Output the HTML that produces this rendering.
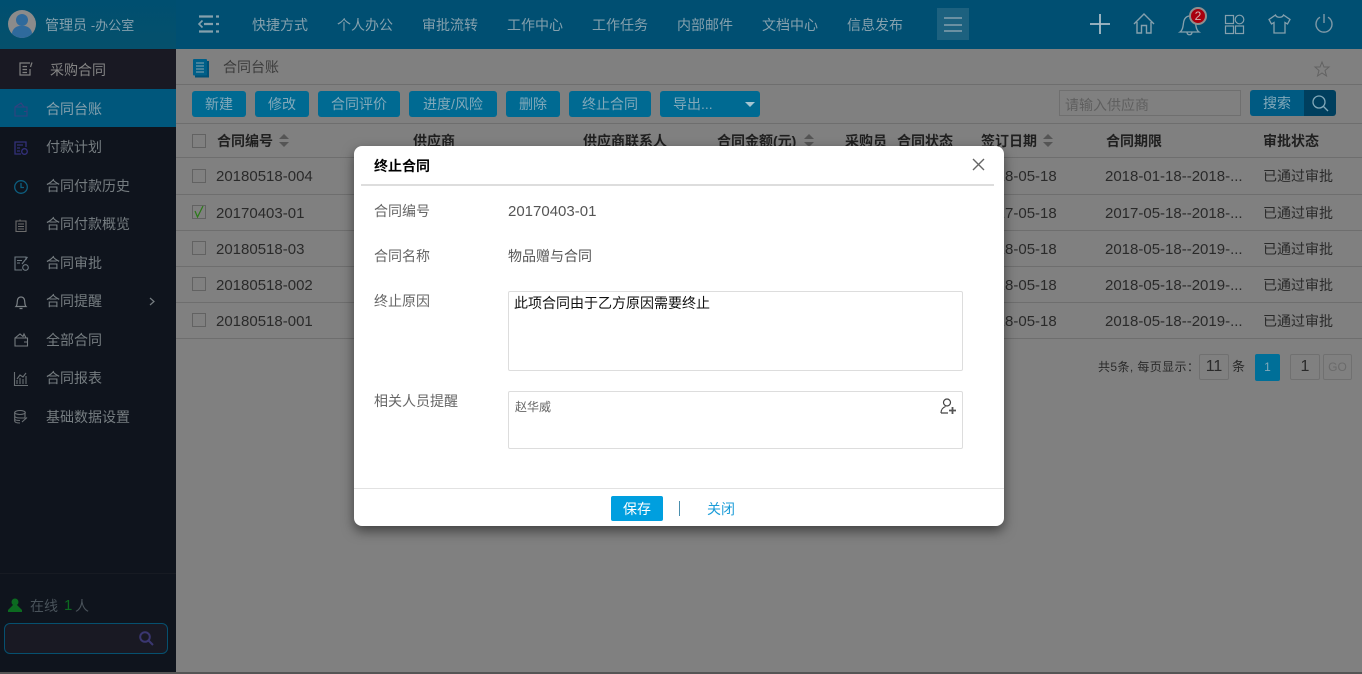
<!DOCTYPE html>
<html lang="zh"><head><meta charset="utf-8"><title>合同台账</title>
<style>
html,body{margin:0;padding:0;width:1362px;height:674px;overflow:hidden;background:#808080}
body{position:relative;font-family:"Liberation Sans","Noto Sans CJK SC",sans-serif;font-size:14px;color:#222}
.a{position:absolute}
.t{position:absolute;line-height:20px;height:20px;white-space:nowrap}
.n{color:#85a0ad}
.s{color:#767d81}
.h{color:#1f1f1f;font-weight:bold}
.c{color:#2a2a2a}
.num{font-size:15px}
.line{position:absolute;height:1px;left:176px;width:1186px;background:#6e6e6e}
.btn{position:absolute;top:91px;height:26px;line-height:26px;background:#006a92;color:#82a9ba;border-radius:3px;text-align:center}
.cb{position:absolute;left:192px;width:12px;height:12px;border:1px solid #626262}
.box{position:absolute;border:1px solid #707070;border-radius:2px;text-align:center;box-sizing:border-box}
svg{position:absolute;overflow:visible}
#modal{position:absolute;left:354px;top:146px;width:650px;height:380px;background:#fff;border-radius:8px;box-shadow:0 5px 12px rgba(0,0,0,.5)}
#modal .t{color:#666}
.fld{position:absolute;left:154px;width:455px;box-sizing:border-box;border:1px solid #ddd;border-radius:2px}
</style></head><body>

<!-- header -->
<div class="a" style="left:0;top:0;width:1362px;height:49px;background:#004f72"></div>
<div class="a" style="left:0;top:0;width:176px;height:49px;background:linear-gradient(#004f70,#05506c)"></div>
<div class="a" style="left:8px;top:10px;width:28px;height:28px;border-radius:50%;background:#8b8b8b;overflow:hidden">
  <div class="a" style="left:8px;top:4px;width:12px;height:12px;border-radius:50%;background:#2f6a9c"></div>
  <div class="a" style="left:4px;top:16px;width:20px;height:14px;border-radius:8px 8px 0 0;background:#2f6a9c"></div>
</div>
<div class="t n" style="left:45px;top:15px">管理员 <span style="font-size:13px">-办公室</span></div>
<svg style="left:198px;top:15px" width="22" height="20" fill="none" stroke="#85a0ad" stroke-width="2.200"><path d="M1 1.500H15M18 1.500H21M6 9H15M18 9H21M1 16.500H15M18 16.500H21"/><path d="M4.500 5.500L1 9L4.500 12.500" stroke-width="1.600"/></svg>
<div class="t n" style="left:252px;top:15px">快捷方式</div>
<div class="t n" style="left:337px;top:15px">个人办公</div>
<div class="t n" style="left:422px;top:15px">审批流转</div>
<div class="t n" style="left:507px;top:15px">工作中心</div>
<div class="t n" style="left:592px;top:15px">工作任务</div>
<div class="t n" style="left:677px;top:15px">内部邮件</div>
<div class="t n" style="left:762px;top:15px">文档中心</div>
<div class="t n" style="left:847px;top:15px">信息发布</div>
<div class="a" style="left:937px;top:8px;width:32px;height:32px;background:#1d617f"></div>
<svg style="left:944px;top:17px" width="18" height="15" stroke="#85a0ad" stroke-width="1.500"><path d="M0 1H18M0 8H18M0 14H18"/></svg>

<svg style="left:1090px;top:14px" width="20" height="20" stroke="#a9bcc6" stroke-width="1.800"><path d="M0 10H20M10 0V20"/></svg>
<svg style="left:1133px;top:13px" width="22" height="21" fill="none" stroke="#85a0ad" stroke-width="1.400"><path d="M1 11L11 1L21 11M4 9V20H8.500V12.500H13.500V20H18V9"/></svg>
<svg style="left:1179px;top:13px" width="21" height="23" fill="none" stroke="#85a0ad" stroke-width="1.300"><path d="M1 19C4 17 4 13 4.500 10C5 5 8 3 10.500 3C13 3 16 5 16.500 10C17 13 17 17 20 19ZM8 19.500C8.500 22.500 12.500 22.500 13 19.500"/></svg>
<div class="a" style="left:1189px;top:7px;width:14px;height:14px;border:2px solid #8f8f8f;border-radius:50%;background:#a8000e;color:#d7b3b3;font-size:12px;line-height:14px;text-align:center">2</div>
<svg style="left:1225px;top:15px" width="19" height="19" fill="none" stroke="#85a0ad" stroke-width="1.200"><rect x=".5" y=".5" width="8" height="8"/><circle cx="14.500" cy="4.500" r="4.300"/><rect x=".5" y="11" width="8" height="7.500"/><rect x="10.500" y="11" width="8" height="7.500"/></svg>
<svg style="left:1268px;top:14px" width="23" height="20" fill="none" stroke="#85a0ad" stroke-width="1.300"><path d="M7.500 1L1 5.500L3.500 10L6 8.500V19H17V8.500L19.500 10L22 5.500L15.500 1C14.500 4 8.500 4 7.500 1Z"/></svg>
<svg style="left:1315px;top:14px" width="18" height="19" fill="none" stroke="#7f99a7" stroke-width="1.400"><path d="M9 0V9M5 3.200A8 8 0 1 0 13 3.200"/></svg>

<!-- sidebar -->
<div class="a" style="left:0;top:49px;width:176px;height:625px;background:#0f141d"></div>
<div class="a" style="left:0;top:49px;width:176px;height:40px;background:#191923"></div>
<div class="a" style="left:0;top:89px;width:176px;height:38px;background:#00577c"></div>
<svg style="left:19px;top:62px" width="14" height="14" fill="none" stroke="#808080" stroke-width="1.200"><path d="M11 1H1V13H11V7M3.500 4.500H8M3.500 7.500H8M3.500 10.500H8M13 0.500L11.500 5"/></svg>
<div class="t" style="left:50px;top:60px;color:#858585">采购合同</div>
<svg style="left:14px;top:102px" width="14" height="15" fill="none" stroke="#33427f" stroke-width="1.100"><path d="M1 5L7 1L10 5M1 5H13V14H1ZM10 9.500H13"/></svg>
<div class="t s" style="left:46px;top:99px;color:#85a0ad">合同台账</div>
<svg style="left:14px;top:141px" width="14" height="14" fill="none" stroke="#33307a" stroke-width="1.300"><path d="M12 6V1H1V13H7M3 4H9M3 7H6M3 10H6"/><circle cx="10.500" cy="10.500" r="2.800"/></svg>
<div class="t s" style="left:46px;top:137px">付款计划</div>
<svg style="left:14px;top:180px" width="14" height="14" fill="none" stroke="#0d5e7f" stroke-width="1.300"><circle cx="7" cy="7" r="6.300"/><path d="M7 3V7.500H10"/></svg>
<div class="t s" style="left:46px;top:176px">合同付款历史</div>
<svg style="left:15px;top:219px" width="12" height="13" fill="none" stroke="#6c6c6c" stroke-width="1.100"><path d="M1 2H11V12.500H1ZM5 2V.5M3 5H9M3 7.500H9M3 10H9"/></svg>
<div class="t s" style="left:46px;top:214px">合同付款概览</div>
<svg style="left:14px;top:256px" width="15" height="15" fill="none" stroke="#6d7880" stroke-width="1.100"><path d="M12 4V1H1V14H8M3 4.500H8M3 7H6"/><path d="M13.500 1L8 8"/><circle cx="11.500" cy="11.500" r="2.800"/></svg>
<div class="t s" style="left:46px;top:253px">合同审批</div>
<svg style="left:15px;top:296px" width="12" height="13" fill="none" stroke="#7c8286" stroke-width="1.200"><path d="M1 10.500C2.500 9 2 6 2.500 4C3 2 4.500 1 6 1C7.500 1 9 2 9.500 4C10 6 9.500 9 11 10.500ZM4.500 12.500H7.500"/></svg>
<div class="t s" style="left:46px;top:291px">合同提醒</div>
<svg style="left:149px;top:297px" width="6" height="9" fill="none" stroke="#767d81" stroke-width="1.200"><path d="M1 1L5 4.500L1 8"/></svg>
<svg style="left:14px;top:333px" width="14" height="14" fill="none" stroke="#747a7e" stroke-width="1.100"><path d="M1 5L6 1L9 3.500L10 1L12 5M1 5H13.500V13H1ZM10 9H13.500"/></svg>
<div class="t s" style="left:46px;top:330px">全部合同</div>
<svg style="left:14px;top:372px" width="14" height="14" fill="none" stroke="#696f73" stroke-width="1.100"><path d="M.5 0V13.500H14M3 12V8M6 12V6M9 12V7M12 12V4M3 7L6 3L9 5L12 1"/></svg>
<div class="t s" style="left:46px;top:368px">合同报表</div>
<svg style="left:14px;top:410px" width="14" height="14" fill="none" stroke="#6b7074" stroke-width="1.100"><ellipse cx="6" cy="2.500" rx="5.300" ry="2"/><path d="M.7 2.500V11C.7 12.500 3 13 6 13M.7 6C.7 7.500 3 8 6 8H11V2.500M.7 9C.7 10 3 10.500 6 10.500"/><path d="M8 12L13 7.500"/></svg>
<div class="t s" style="left:46px;top:407px">基础数据设置</div>

<div class="a" style="left:0;top:573px;width:176px;height:1px;background:#171b23"></div>
<svg style="left:8px;top:598px" width="14" height="14" fill="#0c6a20"><circle cx="7" cy="4" r="3.500"/><path d="M5 7H9L14 12V14H0V12Z"/></svg>
<div class="t" style="left:30px;top:596px;color:#49525a">在线</div>
<div class="t" style="left:64px;top:596px;color:#0c6a20;font-size:15px">1</div>
<div class="t" style="left:75px;top:596px;color:#49525a">人</div>
<div class="a" style="left:4px;top:623px;width:162px;height:29px;border:1px solid #06506f;border-radius:6px;background:#191923"></div>
<svg style="left:139px;top:631px" width="15" height="15" fill="none" stroke="#3a3670" stroke-width="2"><circle cx="6" cy="6" r="4.800"/><path d="M9.500 9.500L14 14"/></svg>

<div class="a" style="left:0;top:672px;width:1362px;height:2px;background:#555"></div>

<!-- breadcrumb -->
<svg style="left:193px;top:59px" width="17" height="19" fill="#005f88"><rect x="2" y="2" width="14" height="16.500" fill="#004f75"/><rect x="0" y="0" width="14" height="16.500" rx="1"/><path d="M3 4H11M3 7H11M3 10H11M3 13H11" stroke="#8aa4b0" stroke-width="1"/></svg>
<div class="t" style="left:223px;top:57px;color:#3c3c3c">合同台账</div>
<svg style="left:1314px;top:61px" width="16" height="16" fill="none" stroke="#626262" stroke-width="1"><path d="M8 1L10 6H15L11 9.500L12.500 15L8 12L3.500 15L5 9.500L1 6H6Z"/></svg>
<div class="line" style="top:84px"></div>

<!-- toolbar -->
<div class="btn" style="left:192px;width:54px">新建</div>
<div class="btn" style="left:255px;width:54px">修改</div>
<div class="btn" style="left:318px;width:82px">合同评价</div>
<div class="btn" style="left:409px;width:88px">进度/风险</div>
<div class="btn" style="left:506px;width:54px">删除</div>
<div class="btn" style="left:569px;width:82px">终止合同</div>
<div class="btn" style="left:660px;width:100px;text-align:left;text-indent:13px">导出...</div>
<div class="a" style="left:745px;top:102px;width:0;height:0;border:5px solid transparent;border-top:5px solid #a5c4d1;border-bottom:0"></div>
<div class="a" style="left:1059px;top:90px;width:180px;height:24px;border:1px solid #6f6f6f"></div>
<div class="t" style="left:1065px;top:95px;color:#5f5f5f">请输入供应商</div>
<div class="a" style="left:1250px;top:90px;width:54px;height:26px;line-height:26px;text-align:center;background:#005a82;color:#82a9ba;border-radius:3px 0 0 3px">搜索</div>
<div class="a" style="left:1304px;top:90px;width:32px;height:26px;background:#003f5e;border-radius:0 3px 3px 0"></div>
<svg style="left:1312px;top:95px" width="17" height="17" fill="none" stroke="#82a9ba" stroke-width="1.300"><circle cx="7" cy="7" r="6"/><path d="M11.500 11.500L16 16"/></svg>
<div class="line" style="top:123px"></div>

<!-- table header -->
<div class="cb" style="top:134px"></div>
<div class="t h" style="left:217px;top:131px">合同编号</div>
<div class="a" style="left:279px;top:134px;border:5px solid transparent;border-bottom:5px solid #555;border-top:0"></div>
<div class="a" style="left:279px;top:142px;border:5px solid transparent;border-top:5px solid #555;border-bottom:0"></div>
<div class="t h" style="left:413px;top:131px">供应商</div>
<div class="t h" style="left:583px;top:131px">供应商联系人</div>
<div class="t h" style="left:717px;top:131px">合同金额(元)</div>
<div class="a" style="left:804px;top:134px;border:5px solid transparent;border-bottom:5px solid #555;border-top:0"></div>
<div class="a" style="left:804px;top:142px;border:5px solid transparent;border-top:5px solid #555;border-bottom:0"></div>
<div class="t h" style="left:845px;top:131px">采购员</div>
<div class="t h" style="left:897px;top:131px">合同状态</div>
<div class="t h" style="left:981px;top:131px">签订日期</div>
<div class="a" style="left:1043px;top:134px;border:5px solid transparent;border-bottom:5px solid #555;border-top:0"></div>
<div class="a" style="left:1043px;top:142px;border:5px solid transparent;border-top:5px solid #555;border-bottom:0"></div>
<div class="t h" style="left:1106px;top:131px">合同期限</div>
<div class="t h" style="left:1263px;top:131px">审批状态</div>
<div class="line" style="top:157px"></div>

<!-- rows -->
<div class="cb" style="top:169px"></div>
<div class="t c num" style="left:216px;top:167px">20180518-004</div>
<div class="t c num" style="left:980px;top:167px">2018-05-18</div>
<div class="t c num" style="left:1105px;top:167px">2018-01-18--2018-...</div>
<div class="t c" style="left:1263px;top:166px">已通过审批</div>
<div class="line" style="top:194px"></div>

<div class="cb" style="top:205px"></div>
<svg style="left:193px;top:205px" width="12" height="13" fill="none" stroke="#2a7a18" stroke-width="1.200"><path d="M2 6L4.500 12L10 1"/></svg>
<div class="t c num" style="left:216px;top:204px">20170403-01</div>
<div class="t c num" style="left:980px;top:204px">2017-05-18</div>
<div class="t c num" style="left:1105px;top:204px">2017-05-18--2018-...</div>
<div class="t c" style="left:1263px;top:203px">已通过审批</div>
<div class="line" style="top:230px"></div>

<div class="cb" style="top:241px"></div>
<div class="t c num" style="left:216px;top:240px">20180518-03</div>
<div class="t c num" style="left:980px;top:240px">2018-05-18</div>
<div class="t c num" style="left:1105px;top:240px">2018-05-18--2019-...</div>
<div class="t c" style="left:1263px;top:239px">已通过审批</div>
<div class="line" style="top:266px"></div>

<div class="cb" style="top:277px"></div>
<div class="t c num" style="left:216px;top:276px">20180518-002</div>
<div class="t c num" style="left:980px;top:276px">2018-05-18</div>
<div class="t c num" style="left:1105px;top:276px">2018-05-18--2019-...</div>
<div class="t c" style="left:1263px;top:275px">已通过审批</div>
<div class="line" style="top:302px"></div>

<div class="cb" style="top:313px"></div>
<div class="t c num" style="left:216px;top:312px">20180518-001</div>
<div class="t c num" style="left:980px;top:312px">2018-05-18</div>
<div class="t c num" style="left:1105px;top:312px">2018-05-18--2019-...</div>
<div class="t c" style="left:1263px;top:311px">已通过审批</div>
<div class="line" style="top:338px"></div>

<!-- pagination -->
<div class="t c" style="left:1098px;top:357px;font-size:12px;letter-spacing:.4px">共5条, 每页显示：</div>
<div class="box c" style="left:1199px;top:354px;width:30px;height:26px;line-height:24px;font-size:16px">11</div>
<div class="t c" style="left:1232px;top:357px;font-size:13px">条</div>
<div class="a" style="left:1255px;top:354px;width:25px;height:27px;line-height:27px;text-align:center;background:#006f98;color:#82a9ba;border-radius:2px;font-size:12px">1</div>
<div class="box c" style="left:1290px;top:354px;width:30px;height:26px;line-height:24px;font-size:16px">1</div>
<div class="box" style="left:1323px;top:354px;width:29px;height:26px;line-height:24px;font-size:12px;color:#6a6a6a">GO</div>

<!-- modal -->
<div id="modal">
  <div class="t" style="left:20px;top:10px;color:#000;font-weight:bold">终止合同</div>
  <svg style="left:618px;top:12px" width="13" height="13" stroke="#666" stroke-width="1.400"><path d="M1 1L12 12M12 1L1 12"/></svg>
  <div class="a" style="left:7px;top:38px;width:633px;height:2px;background:#ddd"></div>

  <div class="t" style="left:20px;top:55px">合同编号</div>
  <div class="t num" style="left:154px;top:56px;color:#555">20170403-01</div>
  <div class="t" style="left:20px;top:100px">合同名称</div>
  <div class="t" style="left:154px;top:100px;color:#555">物品赠与合同</div>
  <div class="t" style="left:20px;top:145px">终止原因</div>
  <div class="fld" style="top:145px;height:80px"></div>
  <div class="t" style="left:160px;top:147px;color:#111">此项合同由于乙方原因需要终止</div>
  <div class="t" style="left:20px;top:245px">相关人员提醒</div>
  <div class="fld" style="top:245px;height:58px"></div>
  <div class="t" style="left:161px;top:251px;font-size:12px">赵华威</div>
  <svg style="left:586px;top:252px" width="17" height="17" fill="none" stroke="#444" stroke-width="1.200"><circle cx="7" cy="4.500" r="3.500"/><path d="M1 15C1 11.500 3 9.500 5.500 8.500M1 15H8"/><path d="M12.500 9V16M9 12.500H16" stroke-width="1.800" stroke="#555"/></svg>

  <div class="a" style="left:0;top:342px;width:650px;height:1px;background:#e2e2e2"></div>
  <div class="a" style="left:257px;top:350px;width:52px;height:25px;line-height:27px;background:#009fdf;color:#fff;text-align:center;border-radius:2px">保存</div>
  <div class="a" style="left:325px;top:355px;width:1px;height:15px;background:#4a8fae"></div>
  <div class="t" style="left:353px;top:353px;color:#1b9cd8">关闭</div>
</div>
</body></html>
